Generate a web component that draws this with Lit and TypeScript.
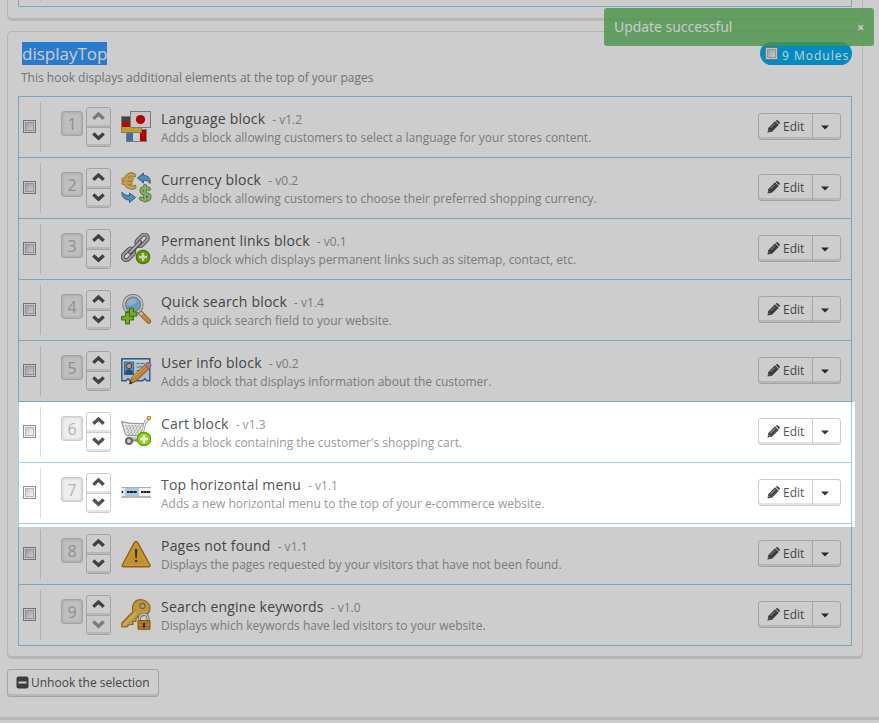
import { LitElement, html, svg, css } from "lit";
import { customElement, property } from "lit/decorators.js";

const icons: Record<string, unknown> = {
  flags: svg`
    <g stroke-width="1">
      <rect x="5.5" y="18.5" width="20" height="12" fill="#fff" stroke="#999"/>
      <rect x="6" y="19" width="6" height="11" fill="#4c88cb"/><rect x="19" y="19" width="6" height="11" fill="#e00000"/>
      <rect x=".5" y="5.500" width="20" height="16" fill="#e01010" stroke="#a8986a"/>
      <rect x="1" y="6" width="19" height="5" fill="#555"/><rect x="1" y="16" width="19" height="5" fill="#ebc63e"/>
      <rect x="9.500" y=".5" width="20" height="16" fill="#f7f7f7" stroke="#999"/>
      <circle cx="19.500" cy="8.500" r="4.600" fill="#df0000"/>
    </g>`,
  currency: svg`
    <g fill="none" stroke-linecap="round" stroke-linejoin="round">
      <g stroke="#b9832e" stroke-width="4.200"><path d="M13 3.500C9 .8 5 4 4.800 9c0 5 4 8 8.500 6M2.500 7.500h8M2.500 11h7"/></g>
      <g stroke="#f3c765" stroke-width="2.600"><path d="M13 3.500C9 .8 5 4 4.800 9c0 5 4 8 8.500 6M2.500 7.500h8M2.500 11h7"/></g>
      <g stroke="#5e9149" stroke-width="4"><path d="M28 17c-3-2.500-7.500-1-7.500 1.700 0 4.500 8 2 8 6 0 3.500-5 4-8.500 1.800M24 14v14.500"/></g>
      <g stroke="#acd580" stroke-width="2.300"><path d="M28 17c-3-2.500-7.500-1-7.500 1.700 0 4.500 8 2 8 6 0 3.500-5 4-8.500 1.800M24 14v14.500"/></g>
    </g>
    <path d="M16.500 6l6-5v2.500c5 0 7.500 3 6.500 8-1.500-2.500-3-3.300-6.500-3.300V11z" fill="#65aede" stroke="#3b79a6"/>
    <path d="M14.500 25.500l-6 5V28c-5 0-8-3-7.500-8 2 2.800 4 3.500 7.500 3.500v-2.500z" fill="#65aede" stroke="#3b79a6"/>`,
  links: svg`
    <g transform="translate(14.300 14.300) rotate(-46)" fill="none">
      <rect x="-16.500" y="-3.400" width="13.500" height="6.800" rx="3.400" stroke="#6c6c6c" stroke-width="4"/>
      <rect x="-16.500" y="-3.400" width="13.500" height="6.800" rx="3.400" stroke="#c6c6c6" stroke-width="1.900"/>
      <rect x="3" y="-3.400" width="13.500" height="6.800" rx="3.400" stroke="#6c6c6c" stroke-width="4"/>
      <rect x="3" y="-3.400" width="13.500" height="6.800" rx="3.400" stroke="#c6c6c6" stroke-width="1.900"/>
      <path d="M-7 0H7" stroke="#666" stroke-width="4.500" stroke-linecap="round"/><path d="M-7-.3H7" stroke="#ddd" stroke-width="1.900" stroke-linecap="round"/>
    </g>
    <circle cx="22" cy="24" r="6.700" fill="#7cc400" stroke="#5a9000" stroke-width="1.200"/>
    <path d="M22 20v8M18 24h8" stroke="#fff" stroke-width="2.400"/>`,
  search: svg`
    <path d="M19.500 19l8.200 8.200" stroke="#ab7730" stroke-width="5" stroke-linecap="round"/>
    <path d="M19 18.500l2.500 2.500" stroke="#eee" stroke-width="3"/><path d="M22.500 22l5 5" stroke="#f6ac38" stroke-width="3.300" stroke-linecap="round"/>
    <circle cx="12" cy="10.500" r="8.900" fill="#84c3ec" stroke="#888" stroke-width="3.400"/>
    <circle cx="12" cy="10.500" r="8.900" fill="none" stroke="#f0f0f0" stroke-width="1.900"/>
    <path d="M5.500 11a6.500 6.500 0 0 1 11-4.500c-2 4-6 5.500-11 4.500z" fill="#b2ddf5"/>
    <g fill="#94d32c" stroke="#4b8716"><path d="M8.500 14v4H5M8.500 14h4v4H16v4h-3.500v3.500h-4V22H6v-4h2.500z"/>
    <path d="M4.500 18.500h4v3.800h4V26h-4v4h-4v-4H.6v-3.700h3.900z"/></g>`,
  user: svg`
    <path d="M.8 3.800h28v21.900h-3l-2-2-2 2H9l-2-2-2 2H.8z" fill="#d7edf9" stroke="#38729f" stroke-width="1.400"/>
    <path d="M2 5h26v2H2z" fill="#fff"/>
    <rect x="3.500" y="7" width="9" height="12.500" fill="#75b2de" stroke="#4b82ae"/>
    <path d="M4 19.500c0-4.500 2-5 4-5s4 .5 4 5z" fill="#2a63a0"/><circle cx="8" cy="11" r="2.700" fill="#f1c39a" stroke="#6b4b35"/>
    <path d="M15.500 8.500h3m1 0h4M15.500 12h7M15.500 15.500h5" stroke="#6c98b8" stroke-width="1.200"/>
    <path d="M8.500 29l2-6L24.500 9.500l4 3.700L14.500 26.500z" fill="#f4a63a" stroke="#95632a"/>
    <path d="M11.500 23l13-12.500" stroke="#ffdc8d"/><path d="M23.700 10l2.300-2.200q2-1 3.300.7t.3 3.200l-2.100 2.100z" fill="#dd94b2" stroke="#b0698b"/><path d="M8.500 29l1-3 2 2z" fill="#222"/>`,
  cart: svg`
    <path d="M.8 5.800q0-.8 1 0 9 2.500 22.700 1.700L20.500 19.500H6.500Q5 19.500 4 17z" fill="#eee" stroke="#999" stroke-width="1.300"/>
    <g stroke="#aaa" stroke-width="1.600" stroke-dasharray="1.600 1.600"><path d="M4 9.800h18M5 13h16M6 16.200h14"/><path d="M5.600 11.400h16M6.600 14.600h14M7.500 17.800h12"/></g>
    <path d="M27.500 3.500L24.300 6 20 21.500 18 23H6" fill="none" stroke="#999" stroke-width="2.800" stroke-linejoin="round"/>
    <path d="M27.500 3.500L24.300 6 20 21.500 18 23H6" fill="none" stroke="#f2f2f2" stroke-width="1.200"/>
    <circle cx="28" cy="2" r="1.600" fill="#ffe09a" stroke="#cd8526" stroke-width="1.400"/>
    <circle cx="8" cy="25" r="3" fill="#ccc" stroke="#6d6d6d" stroke-width="2.200"/>
    <path d="M12 24.500h5" stroke="#888" stroke-width="2"/>
    <circle cx="23" cy="23" r="6.700" fill="#89d314" stroke="#60a000" stroke-width="1.200"/>
    <path d="M23 19v8M19 23h8" stroke="#fff" stroke-width="2.400"/>`,
  menu: svg`
    <rect x="0" y="10" width="30.500" height="10.500" rx="1" fill="#f0f0f0"/>
    <path d="M.5 10.500H30" stroke="#aaa"/><path d="M.5 20H30" stroke="#999" stroke-width="1.400"/>
    <rect x="4" y="11" width="14" height="8.500" fill="#a9cae5"/>
    <path d="M.7 15h1.500M6 15h2.700m.3 0h3m.3 0h3.400M20 15h2.700m.3 0h2.700m.3 0h3.200" stroke="#222" stroke-width="2"/>`,
  warning: svg`
    <path d="M15 3.500c.8 0 1.300.4 1.700 1.200l12 21.800q1 2.200-1.200 2.200H2.700q-2.300 0-1.100-2.200L13.300 4.700q.6-1.200 1.700-1.200z" fill="#f0b633" stroke="#b87428" stroke-width="1.400"/>
    <path d="M15 5.500L3.500 27h23z" fill="none" stroke="#f6cb50" stroke-width=".9"/>
    <path d="M13.900 11h2.400l-.4 9h-1.600z" fill="#444"/><circle cx="15.100" cy="23" r="1.300" fill="#444"/>`,
  keys: svg`
    <path d="M12 12.500C10 5 14.500.7 19.500.7 25 .7 29 4.400 29 9c0 5.500-4.500 9-11 7.500l-3 3v3h-3v3H8.500l-3 2.500H.8v-4z" fill="#edbd4c" stroke="#b47b2a" stroke-width="1.200"/>
    <path d="M3 26l12-12" stroke="#ffe597" stroke-width="1.300"/>
    <circle cx="21.500" cy="7" r="2.500" fill="#ccc" stroke="#a67a38" stroke-width="1.300"/>
    <path d="M18.500 22v-2.500a4.200 4.200 0 0 1 8.500 0V22" fill="none" stroke="#888" stroke-width="3.200"/><path d="M18.500 22v-2.500a4.200 4.200 0 0 1 8.500 0V22" fill="none" stroke="#f0f0f0" stroke-width="1.400"/>
    <rect x="17.100" y="21.600" width="11.800" height="8.600" rx=".8" fill="#eca91b" stroke="#a0700c" stroke-width="1.200"/>
    <path d="M18 24h10M18 27.500h10" stroke="#bf810d"/><path d="M21.800 24h2.400v4.500h-2.400z" fill="#382b18"/>`,
};

const modules = [
  ["Language block", "1.2", "Adds a block allowing customers to select a language for your stores content.", "flags"],
  ["Currency block", "0.2", "Adds a block allowing customers to choose their preferred shopping currency.", "currency"],
  ["Permanent links block", "0.1", "Adds a block which displays permanent links such as sitemap, contact, etc.", "links"],
  ["Quick search block", "1.4", "Adds a quick search field to your website.", "search"],
  ["User info block", "0.2", "Adds a block that displays information about the customer.", "user"],
  ["Cart block", "1.3", "Adds a block containing the customer's shopping cart.", "cart"],
  ["Top horizontal menu", "1.1", "Adds a new horizontal menu to the top of your e-commerce website.", "menu"],
  ["Pages not found", "1.1", "Displays the pages requested by your visitors that have not been found.", "warning"],
  ["Search engine keywords", "1.0", "Displays which keywords have led visitors to your website.", "keys"],
];

const shared = css`
  * { box-sizing: border-box; }
  svg { display: block; flex: none; }
  .check {
    flex: none; width: 13px; height: 13px; border: 1px solid #8e8f8f;
    background: linear-gradient(135deg, #bfc5d0, #fafafa) content-box, #f4f4f4;
    padding: 2px; box-shadow: inset 0 0 0 1px #f4f4f4, inset 0 0 0 2px #b4b8bd;
  }
  .btn {
    display: flex; align-items: center; background: #fff; color: #555;
    border: 1px solid #ccc; border-radius: 3px; box-shadow: inset 0 -2px 0 #e4e4e4;
    font-size: 12px;
  }
`;

@customElement("module-row")
export class ModuleRow extends LitElement {
  @property({ type: Number }) position = 1;
  @property({ attribute: false }) item: string[] = [];

  static styles = [shared, css`
    :host { display: flex; height: 61px; border-bottom: 1px solid #9ad0ec; align-items: flex-start; }
    .select { width: 22px; height: 50px; margin-top: 5px; padding: 18px 0 0 4px; border-right: 1px solid #ddd; }
    .number {
      width: 22px; height: 25px; margin: 14px 3px 0 20px; border: 1px solid #ccc; border-radius: 3px;
      background: #eee; box-shadow: inset 0 0 3px #bbb; color: #b3b3b3; text-align: center; font-size: 16px; line-height: 24px;
    }
    .order { width: 25px; height: 40px; margin: 10px 10px 0 0; border: 1px solid #ccc; border-radius: 3px; overflow: hidden; }
    .step { height: 19px; display: flex; justify-content: center; padding-top: 3px; color: #505050; box-shadow: inset 0 -2px 0 #e4e4e4; }
    .step + .step { border-top: 1px solid #ccc; }
    .off { color: #999; }
    .step.off { background: #fafafa; }
    .icon { margin: 14px 8px 0 0; }
    .text { flex: 1; margin-top: 12px; }
    .line { line-height: 19px; height: 19px; white-space: nowrap; color: #999; font-size: 12px; }
    .name { font-size: 14px; color: #555; margin-right: 7px; letter-spacing: .21px; }
    .btn { height: 27px; width: 83px; margin: 16px 10px 0 0; }
    .edit { display: flex; align-items: center; gap: 3px; width: 54px; height: 25px; padding: 0 0 1px 8px; border-right: 1px solid #ccc; }
    .more { flex: 1; display: flex; justify-content: center; padding: 2px 3px 0 0; }
  `];

  private chevron(down: boolean) {
    return html`<svg width="13" height="10" viewBox="0 0 13 10"><path d=${down ? "M1.300 2.500l5.200 4.700 5.200-4.700" : "M1.300 7.700l5.200-4.700 5.200 4.700"} fill="none" stroke="currentColor" stroke-width="3.300"/></svg>`;
  }

  render() {
    const [name, version, description, icon] = this.item;
    return html`
      <div class="select"><div class="check"></div></div>
      <div class="number">${this.position}</div>
      <div class="order">
        <div class="step ${this.position === 1 ? "off" : ""}">${this.chevron(false)}</div>
        <div class="step ${this.position === 9 ? "off" : ""}">${this.chevron(true)}</div>
      </div>
      <svg class="icon" width="32" height="32" viewBox="0 0 32 32">${icons[icon]}</svg>
      <div class="text">
        <div class="line"><span class="name">${name}</span><span>- v${version}</span></div>
        <div class="line">${description}</div>
      </div>
      <div class="btn">
        <div class="edit">
          <svg width="13" height="13" viewBox="0 0 13 13"><path d="M.5 12.500l.8-4.500L8 1.300 11.700 5 5 11.700zM8.700.8l.8-.6q.8-.4 1.500.2l1.600 1.600q.6.700 0 1.400l-.7.900z" fill="#4c4c4c"/><path d="M3.500 8l4.500-4.500M1.700 10.200l1.200 1.200" stroke="#ccc" stroke-width=".8"/></svg>
          <span>Edit</span>
        </div>
        <div class="more"><svg width="8" height="5" viewBox="0 0 8 5"><path d="M0 .5h8l-4 4z" fill="#333"/></svg></div>
      </div>`;
  }
}

@customElement("app-root")
export class AppRoot extends LitElement {
  static styles = [shared, css`
    :host { display: block; position: relative; width: 879px; height: 723px; overflow: hidden; background: #fff; font-family: "Open Sans", sans-serif; font-size: 12px; color: #555; }
    .panel { width: 856px; margin-left: 7px; border: 1px solid #e1e1e1; border-radius: 5px; box-shadow: 0 2px 0 #e4e4e4; padding: 0 10px; }
    .previous { height: 19px; border-top: 0; border-radius: 0 0 5px 5px; }
    .tail { height: 7px; border: 1px solid #9ad0ec; border-top: 0; padding-left: 21px; }
    .tail::before { content: ""; display: block; width: 1px; height: 1px; background: #ddd; }
    .hook { margin-top: 12px; height: 626px; }
    .head { height: 64px; display: flex; justify-content: space-between; padding: 10px 0 0 4px; }
    .title { display: inline-block; height: 23px; line-height: 23px; font-size: 17px; background: #39f; color: #fff; }
    .about { margin: 3px 0 0 -1px; line-height: 20px; color: #8f8f8f; }
    .badge { display: flex; align-items: center; gap: 4px; width: 92px; height: 23px; border-radius: 12px; background: #00aff0; color: #fff; padding: 3px 5px 0; letter-spacing: 1px; white-space: nowrap; }
    .badge .check { margin-top: -4px; }
    .list { border: 1px solid #9ad0ec; border-bottom: 0; }
    .unhook { display: flex; gap: 2px; width: 152px; height: 28px; margin: 12px 0 0 7px; padding: 0 0 1px 8px; white-space: nowrap; }
    .footer { height: 3px; margin-top: 20px; background: #e4e4e4; }
    .toast { position: absolute; left: 604px; top: 8px; width: 270px; height: 38px; border-radius: 3px; background: #5cb85c; opacity: .8; color: #fff; display: flex; justify-content: space-between; padding: 0 10px; line-height: 37px; font-size: 14px; }
    .close { font-size: 12px; line-height: 39px; font-weight: 700; }
    .spotlight { position: absolute; left: 18px; top: 402px; width: 837px; height: 125px; box-shadow: 0 0 0 1000px rgba(0, 0, 0, .196); }
  `];

  render() {
    return html`
      <div class="panel previous"><div class="tail"></div></div>
      <section class="panel hook">
        <div class="head">
          <div><div class="title">displayTop</div><div class="about">This hook displays additional elements at the top of your pages</div></div>
          <div class="badge"><div class="check"></div><span>9 Modules</span></div>
        </div>
        <div class="list">${modules.map((m, i) => html`<module-row .position=${i + 1} .item=${m}></module-row>`)}</div>
      </section>
      <div class="btn unhook">
        <svg width="13" height="13" viewBox="0 0 13 13"><rect x=".5" y=".5" width="12" height="12" rx="2" fill="#4c4c4c"/><path d="M2.500 6.500h8" stroke="#fff" stroke-width="2"/></svg>
        <span>Unhook the selection</span>
      </div>
      <div class="footer"></div>
      <div class="toast"><span>Update successful</span><span class="close">×</span></div>
      <div class="spotlight"></div>`;
  }
}
